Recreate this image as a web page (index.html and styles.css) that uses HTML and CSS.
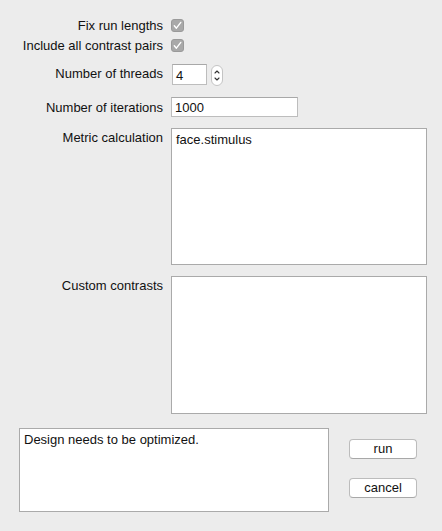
FILE: index.html
```html
<!DOCTYPE html>
<html>
<head>
<meta charset="utf-8">
<link rel="stylesheet" href="styles.css">
</head>
<body>
<div class="panel">
  <div class="row row-check first">
    <div class="label">Fix run lengths</div>
    <span class="check"><svg width="13" height="13" viewBox="0 0 13 13"><path d="M3.3 6.8 L5.4 9.2 L9.8 3.4" fill="none" stroke="#fff" stroke-width="1.4" stroke-linecap="round" stroke-linejoin="round"/></svg></span>
  </div>
  <div class="row row-check second">
    <div class="label">Include all contrast pairs</div>
    <span class="check"><svg width="13" height="13" viewBox="0 0 13 13"><path d="M3.3 6.8 L5.4 9.2 L9.8 3.4" fill="none" stroke="#fff" stroke-width="1.4" stroke-linecap="round" stroke-linejoin="round"/></svg></span>
  </div>
  <div class="row row-threads">
    <div class="label">Number of threads</div>
    <div class="spin">
      <div class="field small">4</div>
      <span class="stepper"><svg width="12" height="21" viewBox="0 0 12 21"><path d="M4 8 L6 6 L8 8" fill="none" stroke="#333" stroke-width="1.1" stroke-linecap="round" stroke-linejoin="round"/><path d="M4 13 L6 15 L8 13" fill="none" stroke="#333" stroke-width="1.1" stroke-linecap="round" stroke-linejoin="round"/></svg></span>
    </div>
  </div>
  <div class="row row-iter">
    <div class="label">Number of iterations</div>
    <div class="field wide">1000</div>
  </div>
  <div class="row row-area">
    <div class="label">Metric calculation</div>
    <div class="area">face.stimulus</div>
  </div>
  <div class="row row-area second-area">
    <div class="label">Custom contrasts</div>
    <div class="area"></div>
  </div>
  <div class="bottom">
    <div class="status">Design needs to be optimized.</div>
    <div class="buttons">
      <div class="btn">run</div>
      <div class="btn">cancel</div>
    </div>
  </div>
</div>
</body>
</html>
```

FILE: styles.css
```css
html, body {
  margin: 0;
  padding: 0;
  background: #ececec;
}
body {
  width: 442px;
  height: 531px;
  overflow: hidden;
  font-family: "Liberation Sans", Arial, sans-serif;
  font-size: 13px;
  color: #111;
}
.panel {
  display: flex;
  flex-direction: column;
}
.row {
  display: flex;
  align-items: flex-start;
}
.label {
  width: 163px;
  text-align: right;
  margin-right: 8px;
  white-space: nowrap;
  line-height: 15px;
}
.row-check.first { margin-top: 17px; }
.row-check.second { margin-top: 4px; }
.row-check .label { margin-top: 1px; }
.check {
  display: block;
  width: 13px;
  height: 13px;
  margin-top: 2px;
  box-sizing: border-box;
  background: #a9a9a9;
  border: 1px solid #9a9a9a;
  border-radius: 3px;
  position: relative;
}
.check svg {
  position: absolute;
  left: -1px;
  top: -1px;
}
.row-threads { margin-top: 11px; }
.row-threads .label { margin-top: 2px; }
.spin {
  display: flex;
  align-items: flex-start;
  margin-left: 1px;
}
.field {
  box-sizing: border-box;
  background: #fff;
  border: 1px solid #bdbdbd;
  border-top-color: #a8a8a8;
  padding: 2px 0 0 3px;
  line-height: 16px;
}
.field.small {
  width: 35px;
  height: 21px;
  padding-top: 3px;
}
.stepper {
  display: block;
  width: 12px;
  height: 21px;
  margin-left: 4px;
  margin-top: 1px;
  box-sizing: border-box;
  background: #fff;
  border: 1px solid #c4c4c4;
  border-radius: 6px;
  position: relative;
}
.stepper svg {
  position: absolute;
  left: -1px;
  top: -1px;
}
.row-iter { margin-top: 11px; }
.row-iter .label { margin-top: 3px; }
.field.wide {
  width: 127px;
  height: 20px;
}
.row-area { margin-top: 11px; }
.row-area .label { margin-top: 2px; }
.area {
  box-sizing: border-box;
  width: 256px;
  height: 137px;
  background: #fff;
  border: 1px solid #aaaaaa;
  padding: 3px 0 0 4px;
  line-height: 16px;
}
.second-area .area { height: 138px; }
.second-area { margin-top: 11px; }
.bottom {
  display: flex;
  align-items: flex-start;
  margin-top: 14px;
  padding-left: 19px;
}
.status {
  box-sizing: border-box;
  width: 310px;
  height: 84px;
  background: #fff;
  border: 1px solid #aaaaaa;
  padding: 3px 0 0 4px;
  line-height: 16px;
}
.buttons {
  display: flex;
  flex-direction: column;
  gap: 19px;
  margin-left: 20px;
  margin-top: 11px;
}
.btn {
  box-sizing: border-box;
  width: 68px;
  height: 20px;
  background: #fff;
  border: 1px solid #bcbcbc;
  border-bottom-color: #a8a8a8;
  border-radius: 4px;
  text-align: center;
  line-height: 18px;
}
```
